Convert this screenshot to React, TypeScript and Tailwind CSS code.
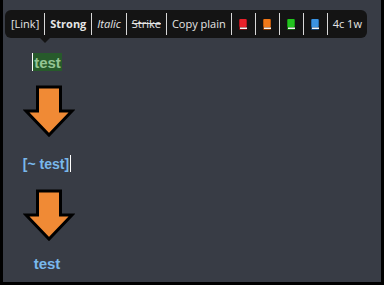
import React from 'react';

const Book = ({ color, dark }: { color: string; dark: string }) => (
  <span className="w-[13px] flex justify-center">
    <svg width="8" height="11" viewBox="0 0 8 11">
      <rect x="0" y="0" width="8" height="11" rx="1" fill={dark} />
      <rect x="0.5" y="0" width="7" height="8" rx="1" fill={color} />
      <rect x="1" y="8.5" width="7" height="1.5" fill="#f4f4f4" />
    </svg>
  </span>
);

const Arrow = () => (
  <svg width="52" height="54" viewBox="0 0 52 54">
    <polygon
      points="14.5,2 37.5,2 37.5,26 49,26 26,50 3,26 14.5,26"
      fill="#f08a35"
      stroke="#000"
      strokeWidth="3"
      strokeLinejoin="miter"
    />
  </svg>
);

const Sep = () => <div className="w-px h-[22px] bg-[#d8d8d8] shrink-0" />;

export default function App() {
  return (
    <div className="w-[384px] h-[285px] bg-black">
      <div className="ml-[3px] w-[378px] h-[282px] bg-[#383c45] relative">
        <div className="pt-[10px] pl-[2px]">
          <div
            className="relative inline-flex items-center whitespace-nowrap h-[28px] rounded-md bg-[#141414] pl-[6px] pr-[5px] gap-[5px] text-[11px] text-[#e6e6e6]"
            style={{ fontFamily: '"Open Sans", sans-serif' }}
          >
            <span>[Link]</span>
            <Sep />
            <span className="font-bold">Strong</span>
            <Sep />
            <span className="italic">Italic</span>
            <Sep />
            <span className="line-through">Strike</span>
            <Sep />
            <span>Copy plain</span>
            <Sep />
            <Book color="#e8202a" dark="#7a0a10" />
            <Sep />
            <Book color="#f07818" dark="#8a3a00" />
            <Sep />
            <Book color="#22c41e" dark="#0c6a0a" />
            <Sep />
            <Book color="#3a92e0" dark="#12467a" />
            <Sep />
            <span>4c 1w</span>
            <div className="absolute left-[34px] -bottom-[5px] w-0 h-0 border-l-[6px] border-r-[6px] border-t-[6px] border-l-transparent border-r-transparent border-t-[#141414]" />
          </div>
        </div>
        <div
          className="w-[88px] flex flex-col items-center font-bold text-[15px] leading-none"
          style={{ fontFamily: '"Liberation Sans", Arial, sans-serif' }}
        >
          <div className="mt-[15px] flex items-center h-[18px]">
            <span className="w-px h-[18px] bg-white" />
            <span className="bg-[#275a2b] text-[#94c494] px-[1px] h-[18px] flex items-center">test</span>
          </div>
          <div className="mt-[14px] ml-[4px]"><Arrow /></div>
          <div className="mt-[16px] flex items-center h-[17px] text-[14px] text-[#79b8ec]">
            <span>[~ test]</span>
            <span className="w-px h-[17px] bg-white ml-[1px]" />
          </div>
          <div className="mt-[17px] ml-[4px]"><Arrow /></div>
          <div className="mt-[13px] text-[#79b8ec]">test</div>
        </div>
      </div>
    </div>
  );
}
